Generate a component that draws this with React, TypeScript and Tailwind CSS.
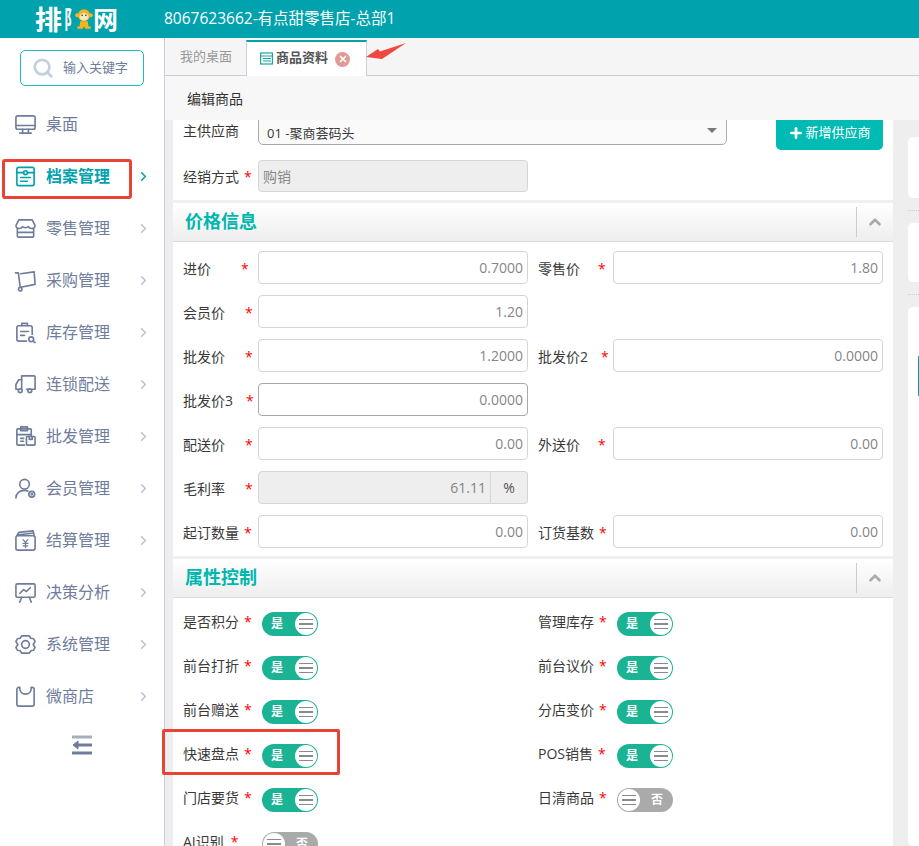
import { ChevronRight, ChevronUp, Plus, Search, X } from 'lucide-react';
import type { ReactNode } from 'react';

const fontStack = 'font-["Open_Sans","Noto_Sans_CJK_SC",sans-serif]';

function NavIcon({ children, active }: { children: ReactNode; active?: boolean }) {
  return (
    <svg
      viewBox="0 0 24 24"
      fill="none"
      strokeWidth="1.7"
      strokeLinecap="round"
      strokeLinejoin="round"
      className={`w-[23px] h-[23px] shrink-0 ${active ? 'stroke-[#00a2ae]' : 'stroke-[#6f7c9b]'}`}
    >
      {children}
    </svg>
  );
}

const navItems = [
  {
    name: '桌面',
    icon: (
      <>
        <rect x="2" y="3" width="20" height="14" rx="2" />
        <path d="M2 13h20M9 17v3M15 17v3M6 21h12" />
      </>
    ),
  },
  {
    name: '档案管理',
    active: true,
    icon: (
      <>
        <rect x="3" y="2.500" width="18" height="19" rx="2" />
        <circle cx="12" cy="8" r="2" />
        <path d="M3 8h7M14 8h7M7 13h10M7 17h7" />
      </>
    ),
  },
  {
    name: '零售管理',
    icon: (
      <>
        <path d="M5 3h14l3 6c0 2-2 3-3.500 3-1.500 0-3-1-3.500-2-1 1.500-5 1.500-6 0-.5 1-2 2-3.500 2S2 11 2 9l3-6z" />
        <path d="M3.500 12v8a1 1 0 0 0 1 1h15a1 1 0 0 0 1-1v-8M3.500 16h17" />
      </>
    ),
  },
  {
    name: '采购管理',
    icon: (
      <>
        <path d="M1.500 4h3l2 15" />
        <path d="M7 5 21 3l1 13-15 3" />
        <circle cx="6.500" cy="21" r="1.800" />
      </>
    ),
  },
  {
    name: '库存管理',
    icon: (
      <>
        <path d="M13 21H5a2 2 0 0 1-2-2V7a2 2 0 0 1 2-2h12a2 2 0 0 1 2 2v7" />
        <path d="M8 5V2.500h6V5M7 11h8M7 15h4" />
        <circle cx="18" cy="19" r="2.500" />
        <path d="m20 21 2 1.500" />
      </>
    ),
  },
  {
    name: '连锁配送',
    icon: (
      <>
        <path d="M8 17V3h13a1 1 0 0 1 1 1v13h-3M13 17h3" />
        <path d="M8 7H5l-3 5v5h2" />
        <circle cx="6.500" cy="18.500" r="2" />
        <circle cx="16.500" cy="18.500" r="2" />
      </>
    ),
  },
  {
    name: '批发管理',
    icon: (
      <>
        <path d="M11 21H4a1 1 0 0 1-1-1V5a1 1 0 0 1 1-1h13a1 1 0 0 1 1 1v6" />
        <path d="M7 2h7v4H7zM3 10h15M7 14h3M7 17h3" />
        <rect x="13" y="12" width="9" height="9" rx="1" />
        <path d="M16 12v3h3v-3" />
      </>
    ),
  },
  {
    name: '会员管理',
    icon: (
      <>
        <circle cx="11" cy="7.500" r="5" />
        <path d="M2 22c0-5 4-8 9-8 1.500 0 2.500.2 3.500.7" />
        <circle cx="18.500" cy="18" r="3" />
        <circle cx="18.500" cy="18" r=".6" />
      </>
    ),
  },
  {
    name: '结算管理',
    icon: (
      <>
        <rect x="2" y="7" width="20" height="15" rx="2" />
        <path d="M3 7 5 3.500 20 2l1 5M5 6l14-1.500" />
        <path d="m9.500 11 2.500 3 2.500-3M9.500 15h5M9.500 17.500h5M12 14v5.500" strokeWidth="1.300" />
      </>
    ),
  },
  {
    name: '决策分析',
    icon: (
      <>
        <rect x="2" y="3" width="20" height="14" rx="1.500" />
        <path d="m6 13 4-4 3 2 4-4M8 17l-2 5M16 17l2 5" />
      </>
    ),
  },
  {
    name: '系统管理',
    icon: (
      <>
        <path d="M8 3h8l1.500 2.500 3 .5 1.500 3-2 3 2 3-1.500 3-3 .5L16 21H8l-1.500-2.500-3-.5L2 15l2-3-2-3 1.500-3 3-.5L8 3z" />
        <circle cx="12" cy="12" r="4" />
      </>
    ),
  },
  {
    name: '微商店',
    icon: (
      <>
        <path d="M6 2.500H5a2 2 0 0 0-2 2V20a2 2 0 0 0 2 2h14a2 2 0 0 0 2-2V4.500a2 2 0 0 0-2-2h-1" />
        <path d="M6 3c0 4 2.500 6.500 6 6.500S18 7 18 3" />
      </>
    ),
  },
];

function Star({ className }: { className?: string }) {
  return <span className={`text-[#ff0000] text-[14px] ${className ?? ''}`}>*</span>;
}

function Label({ text, starClass }: { text: string; starClass: string }) {
  return (
    <div className="w-[75px] shrink-0 pt-[1px] text-[14px] text-[#393939] whitespace-nowrap">
      {text}
      <Star className={starClass} />
    </div>
  );
}

function NumberInput({ value, dark }: { value: string; dark?: boolean }) {
  return (
    <div
      className={`w-[270px] h-[33px] shrink-0 rounded-[4px] border bg-white flex items-center justify-end pr-[4px] text-[14px] text-[#858585] ${
        dark ? 'border-[#aaaaaa]' : 'border-[#d5d5d5]'
      }`}
    >
      {value}
    </div>
  );
}

function Field({
  label,
  value,
  starClass,
  dark,
}: {
  label: string;
  value: string;
  starClass: string;
  dark?: boolean;
}) {
  return (
    <div className="flex items-center w-[345px] shrink-0">
      <Label text={label} starClass={starClass} />
      <NumberInput value={value} dark={dark} />
    </div>
  );
}

function SectionHeader({ title }: { title: string }) {
  return (
    <div className="border-t-[3px] border-[#f0f0f0]">
      <div className="h-[39px] flex items-center justify-between pl-[12px] bg-gradient-to-b from-white to-[#eeeeee] border-b border-[#dddddd]">
        <span className="text-[18px] leading-none font-bold text-[#00b7b0] pb-[3px]">{title}</span>
        <div className="w-[37px] h-[30px] border-l border-[#cccccc] flex items-center justify-center">
          <ChevronUp className="w-[18px] h-[18px] text-[#aaaaaa]" strokeWidth={3.500} />
        </div>
      </div>
    </div>
  );
}

function Toggle({ on }: { on: boolean }) {
  return (
    <div
      className={`w-[56px] h-[24px] shrink-0 rounded-full flex items-center justify-between text-[12px] font-bold text-white ${
        on ? 'bg-[#1ab394] pl-[9px]' : 'bg-[#aaaaaa] flex-row-reverse pr-[10px]'
      }`}
    >
      <span>{on ? '是' : '否'}</span>
      <span
        className={`w-[22px] h-[22px] rounded-full bg-white flex flex-col items-center justify-center gap-[3px] ${
          on ? 'mr-[1px]' : 'ml-[1px]'
        }`}
      >
        <span className="w-[14px] h-[1.500px] bg-[#8a8a8a]" />
        <span className="w-[14px] h-[1.500px] bg-[#8a8a8a]" />
        <span className="w-[14px] h-[1.500px] bg-[#8a8a8a]" />
      </span>
    </div>
  );
}

function ToggleField({ label, on = true, starClass = 'ml-[5px]' }: { label: string; on?: boolean; starClass?: string }) {
  return (
    <div className="flex items-center h-[24px] w-[355px] shrink-0">
      <div className="w-[79px] h-[20px] mb-[4px] shrink-0 leading-[20px] text-[14px] text-[#393939] whitespace-nowrap">
        {label}
        <Star className={starClass} />
      </div>
      <Toggle on={on} />
    </div>
  );
}

const priceRows = [
  [
    { label: '进价', value: '0.7000', starClass: 'ml-[30px]' },
    { label: '零售价', value: '1.80', starClass: 'ml-[18px]' },
  ],
  [{ label: '会员价', value: '1.20', starClass: 'ml-[20px]' }],
  [
    { label: '批发价', value: '1.2000', starClass: 'ml-[20px]' },
    { label: '批发价2', value: '0.0000', starClass: 'ml-[13px]' },
  ],
  [{ label: '批发价3', value: '0.0000', starClass: 'ml-[13px]', dark: true }],
  [
    { label: '配送价', value: '0.00', starClass: 'ml-[20px]' },
    { label: '外送价', value: '0.00', starClass: 'ml-[18px]' },
  ],
];

const toggleRows = [
  ['是否积分', '管理库存'],
  ['前台打折', '前台议价'],
  ['前台赠送', '分店变价'],
  ['快速盘点', 'POS销售'],
];

export default function App() {
  return (
    <div className={`relative w-[919px] h-[846px] overflow-hidden bg-white flex flex-col ${fontStack}`}>
      {/* Header */}
      <header className="h-[38px] shrink-0 bg-[#00a2ae] flex items-center text-white">
        <div className="w-[164px] pl-[35px] flex items-center text-[27px] leading-none font-bold h-full">
          <span>排</span>
          <span className="ml-[2px] w-[14px] flex justify-center text-[14px] scale-y-[1.700]">阝</span>
          <svg viewBox="0 0 24 28" className="ml-[-3px] w-[18px] h-[28px] shrink-0">
            <circle cx="12" cy="9" r="8" fill="#f5b51b" />
            <circle cx="3" cy="9" r="2.800" fill="#f5b51b" />
            <circle cx="21" cy="9" r="2.800" fill="#f5b51b" />
            <ellipse cx="12" cy="11" rx="6" ry="5" fill="#fbe7c0" />
            <circle cx="9.500" cy="9" r="1.100" fill="#333" />
            <circle cx="14.500" cy="9" r="1.100" fill="#333" />
            <path d="M7 17h10l1 7h3v3h-7l-2-3-2 3H3v-3h3z" fill="#f5b51b" />
          </svg>
          <span className="text-[25px]">网</span>
        </div>
        <span className="text-[15.500px] whitespace-nowrap">8067623662-有点甜零售店-总部1</span>
      </header>

      <div className="flex-1 flex min-h-0">
        {/* Sidebar */}
        <aside className="w-[165px] shrink-0 border-r border-[#c5d0dc] flex flex-col">
          <div className="px-[20px] pt-[12px] pb-[12px]">
            <div className="w-[124px] h-[36px] border border-[#1cbcc0] rounded-[5px] flex items-center pl-[11px] gap-[9px]">
              <Search className="w-[22px] h-[22px] text-[#c5cfe0]" strokeWidth={3} />
              <span className="text-[13px] text-[#6f7c9b] whitespace-nowrap">输入关键字</span>
            </div>
          </div>
          <nav>
            {navItems.map((item) => (
              <div key={item.name} className="h-[52px] flex items-center pl-[14px] pr-[13px]">
                <NavIcon active={item.active}>{item.icon}</NavIcon>
                <span
                  className={`ml-[9px] flex-1 text-[16px] whitespace-nowrap ${
                    item.active ? 'text-[#00a2ae] font-bold' : 'text-[#6f7c9b]'
                  }`}
                >
                  {item.name}
                </span>
                {item.name !== '桌面' && (
                  <ChevronRight
                    className={`w-[15px] h-[15px] ${item.active ? 'text-[#00a2ae]' : 'text-[#b9c2d0]'}`}
                    strokeWidth={2.500}
                  />
                )}
              </div>
            ))}
          </nav>
          <div className="flex justify-center mt-[13px]">
            <svg viewBox="0 0 20 20" className="w-[20px] h-[20px]" fill="none" stroke="#6f7c9b" strokeWidth="3">
              <path d="M0 2h20" stroke="#a6aec0" />
              <path d="M3 10h17" />
              <path d="M6 6 1 10l5 4z" fill="#6f7c9b" strokeWidth="1" />
              <path d="M0 18h20" />
            </svg>
          </div>
        </aside>

        {/* Main */}
        <main className="flex-1 min-w-0 flex flex-col">
          <div className="h-[38px] shrink-0 bg-[#f5f5f5] flex items-end pl-[15px] border-b border-[#c5d0dc]">
            <span className="w-[66px] h-[36px] flex items-center text-[13px] text-[#999999]">我的桌面</span>
            <div className="w-[121px] h-[36px] mb-[-1px] pb-[2px] bg-white border-x border-[#c5d0dc] border-t-2 border-t-[#00a2ae] flex items-center pl-[13px]">
              <svg viewBox="0 0 13 13" className="w-[13px] h-[13px]" fill="none" stroke="#1aa5a0" strokeWidth="1.200">
                <rect x=".6" y="1" width="11.800" height="11" />
                <path d="M.6 4h11.800M3 6.500h8M3 9h8" />
              </svg>
              <span className="ml-[3px] text-[13px] font-bold text-[#555555]">商品资料</span>
              <span className="ml-[7px] mt-[2px] w-[15px] h-[15px] rounded-full bg-[#e29a94] flex items-center justify-center">
                <X className="w-[10px] h-[10px] text-white" strokeWidth={4} />
              </span>
            </div>
          </div>
          <div className="h-[44px] shrink-0 bg-[#f7f7f7] flex items-center pl-[22px] text-[14px] text-[#333333]">
            编辑商品
          </div>

          <div className="flex-1 min-h-0 overflow-hidden flex bg-[#eeeeee] pl-[8px]">
            {/* Form panel */}
            <div className="w-[720px] shrink-0 bg-white">
              <div className="px-[10px] mt-[-7px]">
                <div className="flex items-start">
                  <div className="w-[75px] shrink-0 text-[14px] text-[#393939] pt-[7px]">主供应商</div>
                  <div className="w-[469px] h-[32px] bg-[#fafafa] border border-[#aaaaaa] rounded-[5px] flex items-center justify-between pl-[8px] pr-[9px] pt-[10px] text-[13px] text-[#393939]">
                    <span>01 -聚商荟码头</span>
                    <span className="w-0 h-0 mb-[7px] border-x-[5px] border-x-transparent border-t-[5px] border-t-[#777777]" />
                  </div>
                  <div className="ml-[49px] w-[107px] h-[37px] pt-[3px] bg-[#00bbb3] rounded-[5px] flex items-center justify-center text-[13px] text-white whitespace-nowrap">
                    <Plus className="w-[16px] h-[16px]" strokeWidth={4} />
                    <span className="ml-[1px]">新增供应商</span>
                  </div>
                </div>
                <div className="flex items-center mt-[10px] pb-[8px]">
                  <Label text="经销方式" starClass="ml-[5px]" />
                  <div className="w-[270px] h-[32px] bg-[#eeeeee] border border-[#d5d5d5] rounded-[4px] flex items-center pl-[4px] text-[14px] text-[#888888]">
                    购销
                  </div>
                </div>
              </div>

              <SectionHeader title="价格信息" />
              <div className="px-[10px] pt-[9px] pb-[8px] flex flex-col gap-[11px]">
                {priceRows.map((row) => (
                  <div key={row[0].label} className="flex gap-[10px]">
                    {row.map((f) => (
                      <Field key={f.label} {...f} />
                    ))}
                  </div>
                ))}
                <div className="flex items-center">
                  <Label text="毛利率" starClass="ml-[20px]" />
                  <div className="w-[270px] h-[33px] flex text-[14px]">
                    <div className="w-[233px] bg-[#eeeeee] border border-[#d5d5d5] rounded-l-[4px] flex items-center justify-end pr-[4px] text-[#858585]">
                      61.11
                    </div>
                    <div className="flex-1 bg-[#eeeeee] border border-l-0 border-[#d5d5d5] rounded-r-[4px] flex items-center justify-center text-[14px] text-[#555555]">
                      %
                    </div>
                  </div>
                </div>
                <div className="flex gap-[10px]">
                  <Field label="起订数量" value="0.00" starClass="ml-[5px]" />
                  <Field label="订货基数" value="0.00" starClass="ml-[5px]" />
                </div>
              </div>

              <SectionHeader title="属性控制" />
              <div className="px-[10px] pt-[14px] flex flex-col gap-[20px]">
                {toggleRows.map((row) => (
                  <div key={row[0]} className="flex">
                    {row.map((label) => (
                      <ToggleField key={label} label={label} />
                    ))}
                  </div>
                ))}
                <div className="flex">
                  <ToggleField label="门店要货" />
                  <ToggleField label="日清商品" on={false} />
                </div>
                <div className="flex">
                  <ToggleField label="AI识别" on={false} starClass="ml-[7px]" />
                </div>
              </div>
            </div>

            {/* Right column */}
            <div className="flex-1 pl-[15px] pt-[17px] flex flex-col">
              <div className="h-[61px] shrink-0 bg-white rounded-l-[5px]" />
              <div className="my-[12px] border-t border-dotted border-[#cccccc]" />
              <div className="h-[59px] shrink-0 bg-white rounded-l-[5px]" />
              <div className="my-[12px] border-t border-dotted border-[#cccccc]" />
              <div className="flex-1 bg-white rounded-l-[5px] pt-[49px] flex justify-end">
                <div className="w-px h-[40px] bg-[#00a2ae]" />
              </div>
            </div>
          </div>
        </main>
      </div>

      {/* Annotations */}
      <div className="absolute left-[2px] top-[159px] w-[130px] h-[40px] border-[3px] border-[#ea4335] rounded-[3px]" />
      <div className="absolute left-[162px] top-[729px] w-[178px] h-[46px] border-[3px] border-[#ea4335] rounded-[2px]" />
      <svg viewBox="0 0 42 16" className="absolute left-[365px] top-[43px] w-[42px] h-[16px]">
        <path d="M1 14 L13 6 L15 8.500 L41 0 L23 12 L17 16 Z" fill="#f0483e" />
      </svg>
    </div>
  );
}
